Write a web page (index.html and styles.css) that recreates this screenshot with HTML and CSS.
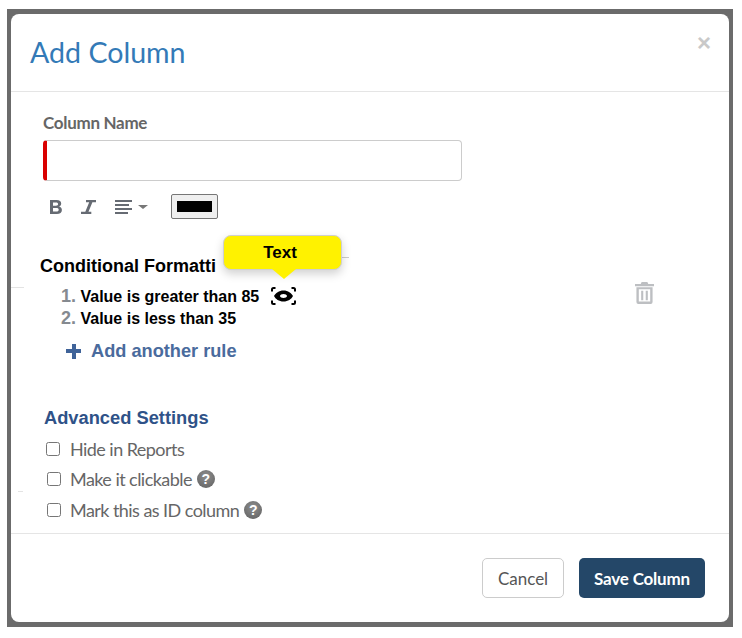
FILE: index.html
```html
<!DOCTYPE html>
<html lang="en">

<head>
    <meta charset="UTF-8" />
    <meta name="viewport" content="width=device-width, initial-scale=1.0" />
    <title>Add Column</title>
    <link rel="stylesheet" href="styles.css">
</head>

<body>
    <div class="backdrop">
        <div class="modal">
            <div class="modal_header">
                <h1>Add Column</h1>
                <span class="close">&times;</span>
            </div>

            <div class="modal_body">
                <label class="field_label" for="columnName">Column Name</label>
                <div class="name_input"><input type="text" id="columnName" /></div>

                <div class="toolbar">
                    <svg class="tool_icon" width="14" height="16" viewBox="0 0 14 16">
                        <path fill="#666b73" fill-rule="evenodd" d="M1 1h6.600c3 0 4.600 1.300 4.600 3.600 0 1.500-.8 2.600-2.100 3 1.700.4 2.800 1.600 2.800 3.400 0 2.600-1.900 4-5 4H1zM4 3.400v3.400h3c1.400 0 2.100-.6 2.100-1.700S8.400 3.400 7 3.400zM4 9.100v3.500h3.400c1.500 0 2.300-.6 2.300-1.800S8.900 9.100 7.400 9.100z" />
                    </svg>
                    <svg class="tool_icon italic_icon" width="15" height="16" viewBox="0 0 15 16">
                        <path fill="#666b73" d="M5 1h10v2.200h-3.600L7.500 12.800H10.300V15H0v-2.200h4.300L8.200 3.200H5z" />
                    </svg>
                    <svg class="tool_icon align_icon" width="18" height="16" viewBox="0 0 18 16">
                        <path fill="#666b73" d="M0 1h17v2H0zM0 5h14v2H0zM0 9h17v2H0zM0 13h13v2H0z" />
                    </svg>
                    <span class="caret"></span>
                    <span class="color_box"><span class="color_swatch"></span></span>
                </div>

                <h3 class="cond_title">Conditional Formatti</h3>

                <span class="stray_line stray_a"></span>
                <span class="stray_line stray_b"></span>
                <span class="stray_line stray_c"></span>
                <div class="tooltip">Text</div>

                <div class="rule_row">
                    <ol class="rules">
                        <li><span class="rule_num">1.</span> Value is greater than 85
                            <svg class="eye" width="25" height="18" viewBox="0 0 25 18">
                                <path fill="none" stroke="#000" stroke-width="2" d="M1 4.500V2.500Q1 1 2.500 1H4.500M20.500 1h2Q24 1 24 2.500V4.500M1 13.500v2Q1 17 2.500 17H4.500M20.500 17h2Q24 17 24 15.500V13.500" />
                                <path fill="#000" fill-rule="evenodd" d="M12.500 3.500C17 3.500 20.500 6 22 9 20.500 12 17 14.500 12.500 14.500S4.500 12 3 9C4.500 6 8 3.500 12.500 3.500zM12.500 7C10.800 7 9 7.900 9 9S10.800 11 12.500 11 16 10.100 16 9 14.200 7 12.500 7z" />
                            </svg>
                        </li>
                        <li><span class="rule_num">2.</span> Value is less than 35</li>
                    </ol>
                    <svg class="trash" width="19" height="22" viewBox="0 0 20 23">
                        <path fill="#bdbfc2" fill-rule="evenodd" d="M7 0h6l1 2h6v2.500H0V2h6zM1.500 5.500h17V21q0 2-2 2h-13q-2 0-2-2zM4 7.500V20.500H16V7.500zM6.500 9h2.200v10H6.500zM11.300 9h2.200v10h-2.200z" />
                    </svg>
                </div>

                <a class="add_rule"><span class="plus"></span>Add another rule</a>

                <h4 class="adv_title">Advanced Settings</h4>
                <label class="check_row first_check"><input type="checkbox" />Hide in Reports</label>
                <label class="check_row"><input type="checkbox" />Make it clickable<span class="help">?</span></label>
                <label class="check_row"><input type="checkbox" />Mark this as ID column<span class="help">?</span></label>
            </div>

            <div class="modal_footer">
                <button class="btn_cancel">Cancel</button>
                <button class="btn_save">Save Column</button>
            </div>
        </div>
    </div>
</body>

</html>
```

FILE: styles.css
```css
html,
body {
    margin: 0;
    padding: 0;
    background-color: #ffffff;
}

body {
    font-family: Lato, Arial, sans-serif;
    height: 638px;
    overflow: hidden;
}

.backdrop {
    width: 718px;
    height: 608px;
    margin: 9px 0 0 7px;
    padding: 5px 4px;
    background-color: #6b6b6b;
}

.modal {
    position: relative;
    display: flex;
    flex-direction: column;
    height: 608px;
    background-color: #ffffff;
    border-radius: 8px;
}

.modal_header {
    position: relative;
    height: 77px;
    border-bottom: 1px solid #e5e5e5;
}

.modal_header h1 {
    margin: 0;
    padding: 21px 0 0 19px;
    font-size: 28.600px;
    line-height: 34px;
    font-weight: 400;
    color: #337ab7;
}

.close {
    position: absolute;
    top: 16px;
    right: 18px;
    font-family: "Liberation Sans", Arial, sans-serif;
    font-size: 24px;
    line-height: 26px;
    font-weight: 700;
    color: #c9c9c9;
}

.modal_body {
    flex: 1;
    padding: 0 32px;
}

.field_label {
    display: block;
    margin-top: 21px;
    font-size: 17px;
    line-height: 20px;
    font-weight: 700;
    letter-spacing: -0.300px;
    color: #666666;
}

.name_input {
    margin-top: 7px;
    width: 419px;
    height: 41px;
    box-sizing: border-box;
    border: 1px solid #cccccc;
    border-left: 4px solid #d90000;
    border-radius: 4px;
}

.name_input input {
    display: block;
    width: 100%;
    height: 100%;
    box-sizing: border-box;
    border: none;
    background: transparent;
    outline: none;
}

.toolbar {
    display: flex;
    align-items: center;
    height: 25px;
    margin-top: 13px;
    padding-left: 6px;
}

.italic_icon {
    margin-left: 18px;
}

.align_icon {
    margin-left: 19px;
}

.caret {
    width: 0;
    height: 0;
    margin-left: 5px;
    border-left: 5px solid transparent;
    border-right: 5px solid transparent;
    border-top: 4px solid #777777;
}

.color_box {
    display: block;
    width: 47px;
    height: 25px;
    box-sizing: border-box;
    margin-left: 23px;
    padding: 6px 5px;
    background-color: #efefef;
    border: 1px solid #767676;
    border-radius: 2px;
}

.color_swatch {
    display: block;
    height: 100%;
    background-color: #000000;
}

.cond_title {
    margin: 37px 0 0 -3px;
    font-family: "Liberation Sans", Arial, sans-serif;
    font-size: 18px;
    line-height: 20px;
    font-weight: 700;
    color: #000000;
}

.stray_line {
    position: absolute;
    height: 1px;
    background-color: #e3e3e3;
}

.stray_a {
    top: 243px;
    left: 331px;
    width: 7px;
    background-color: #cccccc;
}

.stray_b {
    top: 273px;
    left: 0;
    width: 13px;
}

.stray_c {
    top: 477px;
    left: 7px;
    width: 5px;
}

.tooltip {
    position: absolute;
    top: 221px;
    left: 212px;
    width: 119px;
    height: 35px;
    box-sizing: border-box;
    padding-right: 5px;
    background-color: #fff200;
    border: 1px solid #cfcfcf;
    border-radius: 8px;
    box-shadow: 0 4px 10px rgba(0, 0, 0, 0.18);
    font-family: "Liberation Sans", Arial, sans-serif;
    font-size: 17px;
    line-height: 33px;
    font-weight: 700;
    text-align: center;
    color: #000000;
}

.tooltip::after {
    content: "";
    position: absolute;
    top: 33px;
    left: 48px;
    border-left: 12px solid transparent;
    border-right: 12px solid transparent;
    border-top: 10px solid #fff200;
}

.rule_row {
    display: flex;
    justify-content: space-between;
    width: 611px;
    margin-top: 10px;
}

.rules {
    list-style: none;
    margin: 0;
    padding: 0 0 0 18px;
    font-family: "Liberation Sans", Arial, sans-serif;
    font-size: 16px;
    line-height: 22px;
    font-weight: 700;
    color: #000000;
}

.rules li {
    height: 22px;
}

.rule_num {
    font-size: 18px;
    line-height: 0;
    color: #858a90;
}

.eye {
    margin-left: 7px;
    vertical-align: -3px;
}

.trash {
    margin-top: -4px;
}

.add_rule {
    display: flex;
    align-items: center;
    margin: 10px 0 0 23px;
    font-family: "Liberation Sans", Arial, sans-serif;
    font-size: 18.200px;
    line-height: 22px;
    font-weight: 700;
    color: #4a6b9d;
}

.plus {
    position: relative;
    width: 15px;
    height: 15px;
    margin-right: 10px;
    background:
        linear-gradient(#3f6399, #3f6399) center / 15px 4px no-repeat,
        linear-gradient(#3f6399, #3f6399) center / 4px 15px no-repeat;
}

.adv_title {
    margin: 45px 0 0 1px;
    font-family: "Liberation Sans", Arial, sans-serif;
    font-size: 18.300px;
    line-height: 22px;
    font-weight: 700;
    color: #2f5288;
}

.check_row {
    display: flex;
    align-items: center;
    height: 30px;
    margin-left: 4px;
    font-size: 18px;
    letter-spacing: -0.550px;
    color: #666666;
}

.check_row:last-child {
    margin-top: 1px;
}

.check_row input {
    width: 14px;
    height: 14px;
    margin: 0 9px 0 0;
}

.first_check {
    margin-top: 5px;
    margin-left: 3px;
}

.first_check input {
    margin-right: 10px;
}

.help {
    display: inline-block;
    width: 18px;
    height: 18px;
    margin-left: 5px;
    border-radius: 50%;
    background: radial-gradient(circle at 50% 35%, #8e8e8e, #5f5f5f);
    font-family: "Liberation Sans", Arial, sans-serif;
    font-size: 14px;
    line-height: 18px;
    font-weight: 700;
    text-align: center;
    letter-spacing: 0;
    color: #ffffff;
}

.modal_footer {
    display: flex;
    justify-content: flex-end;
    gap: 15px;
    height: 89px;
    box-sizing: border-box;
    padding: 24px 24px 0 0;
    border-top: 1px solid #e5e5e5;
}

.modal_footer button {
    height: 40px;
    border-radius: 5px;
    font-family: Lato, Arial, sans-serif;
    font-size: 17px;
    cursor: pointer;
}

.btn_cancel {
    width: 82px;
    background-color: #ffffff;
    border: 1px solid #cccccc;
    color: #555555;
}

.btn_save {
    width: 126px;
    background-color: #244768;
    border: none;
    font-weight: 700;
    letter-spacing: -0.200px;
    color: #ffffff;
}
```
